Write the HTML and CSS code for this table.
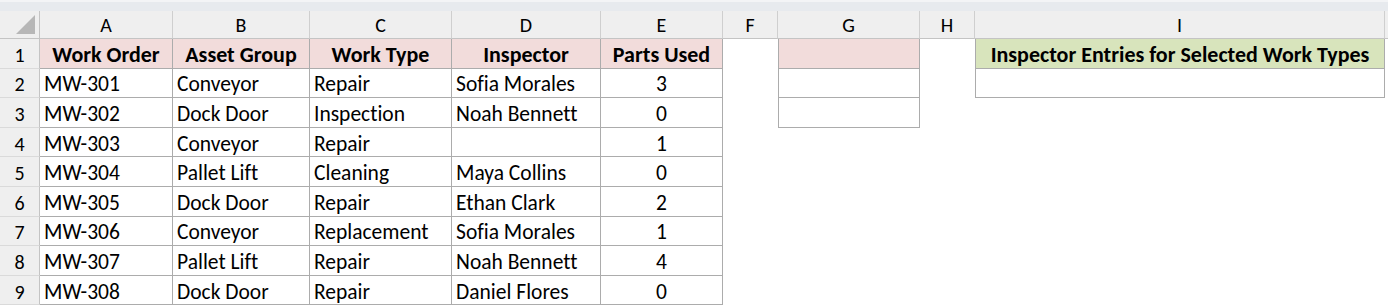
FILE: index.html
```html
<!DOCTYPE html>
<html>
<head>
<meta charset="utf-8">
<link rel="stylesheet" href="styles.css">
</head>
<body>
<div class="topbar"></div>
<div class="sheet">
  <div class="corner"><span class="tri"></span></div>
  <div class="ch">A</div><div class="ch">B</div><div class="ch">C</div><div class="ch">D</div><div class="ch">E</div><div class="ch">F</div><div class="ch">G</div><div class="ch">H</div><div class="ch">I</div><div class="ch end"></div>

  <div class="rh">1</div>
  <div class="c t hd">Work Order</div><div class="c t hd">Asset Group</div><div class="c t hd">Work Type</div><div class="c t hd">Inspector</div><div class="c t hd">Parts Used</div>
  <div class="c"></div><div class="c g hd"></div><div class="c"></div><div class="c i hdg">Inspector Entries for Selected Work Types</div><div class="c"></div>

  <div class="rh">2</div>
  <div class="c t">MW-301</div><div class="c t">Conveyor</div><div class="c t">Repair</div><div class="c t">Sofia Morales</div><div class="c t num">3</div>
  <div class="c"></div><div class="c g"></div><div class="c"></div><div class="c i"></div><div class="c"></div>

  <div class="rh">3</div>
  <div class="c t">MW-302</div><div class="c t">Dock Door</div><div class="c t">Inspection</div><div class="c t">Noah Bennett</div><div class="c t num">0</div>
  <div class="c"></div><div class="c g"></div><div class="c"></div><div class="c"></div><div class="c"></div>

  <div class="rh">4</div>
  <div class="c t">MW-303</div><div class="c t">Conveyor</div><div class="c t">Repair</div><div class="c t"></div><div class="c t num">1</div>
  <div class="c"></div><div class="c"></div><div class="c"></div><div class="c"></div><div class="c"></div>

  <div class="rh">5</div>
  <div class="c t">MW-304</div><div class="c t">Pallet Lift</div><div class="c t">Cleaning</div><div class="c t">Maya Collins</div><div class="c t num">0</div>
  <div class="c"></div><div class="c"></div><div class="c"></div><div class="c"></div><div class="c"></div>

  <div class="rh">6</div>
  <div class="c t">MW-305</div><div class="c t">Dock Door</div><div class="c t">Repair</div><div class="c t">Ethan Clark</div><div class="c t num">2</div>
  <div class="c"></div><div class="c"></div><div class="c"></div><div class="c"></div><div class="c"></div>

  <div class="rh">7</div>
  <div class="c t">MW-306</div><div class="c t">Conveyor</div><div class="c t">Replacement</div><div class="c t">Sofia Morales</div><div class="c t num">1</div>
  <div class="c"></div><div class="c"></div><div class="c"></div><div class="c"></div><div class="c"></div>

  <div class="rh">8</div>
  <div class="c t">MW-307</div><div class="c t">Pallet Lift</div><div class="c t">Repair</div><div class="c t">Noah Bennett</div><div class="c t num">4</div>
  <div class="c"></div><div class="c"></div><div class="c"></div><div class="c"></div><div class="c"></div>

  <div class="rh">9</div>
  <div class="c t">MW-308</div><div class="c t">Dock Door</div><div class="c t">Repair</div><div class="c t">Daniel Flores</div><div class="c t num">0</div>
  <div class="c"></div><div class="c"></div><div class="c"></div><div class="c"></div><div class="c"></div>
</div>
</body>
</html>
```

FILE: styles.css
```css
html, body {
  margin: 0;
  padding: 0;
  background: #ffffff;
  overflow: hidden;
}

body {
  font-family: Carlito, Calibri, Lato, "Liberation Sans", sans-serif;
  font-size: 21.5px;
  font-variant-ligatures: none;
  color: #000000;
  width: 1388px;
  height: 307px;
}

.topbar {
  height: 11px;
  background: #e7eaee;
  box-sizing: border-box;
  border-top: 2px solid #f3f4f6;
}

.sheet {
  display: grid;
  grid-template-columns: 40px 133px 137px 142px 149px 122px 55px 142px 55px 410px 1fr;
  grid-template-rows: 28px;
  grid-auto-rows: 29.6px;
}

.corner {
  background: #efefef;
  border-right: 1px solid #c4c4c4;
  border-bottom: 1px solid #c4c4c4;
  box-sizing: border-box;
  position: relative;
}

.tri {
  position: absolute;
  right: 4px;
  bottom: 4px;
  width: 0;
  height: 0;
  border-left: 19px solid transparent;
  border-bottom: 19px solid #b7b7b7;
}

.ch {
  background: #efefef;
  border-right: 1px solid #cfcfcf;
  border-bottom: 1px solid #c4c4c4;
  box-sizing: border-box;
  display: flex;
  align-items: center;
  justify-content: center;
  padding-top: 1px;
  font-size: 20px;
}

.ch.end {
  border-right: none;
}

.rh {
  background: #efefef;
  border-right: 1px solid #c4c4c4;
  border-bottom: 1px solid #dadada;
  box-sizing: border-box;
  display: flex;
  align-items: center;
  justify-content: center;
  padding-top: 3px;
  font-size: 20px;
}

.c {
  box-sizing: border-box;
  display: flex;
  align-items: center;
  padding: 3px 4px 0 4px;
  white-space: nowrap;
  overflow: hidden;
}

.t {
  border-right: 1px solid #acacac;
  border-bottom: 1px solid #acacac;
}

.g {
  border-left: 1px solid #acacac;
  border-right: 1px solid #acacac;
  border-bottom: 1px solid #acacac;
}

.i {
  border-left: 1px solid #acacac;
  border-right: 1px solid #acacac;
  border-bottom: 1px solid #acacac;
}

.hd {
  background: #f2dcdb;
  font-weight: bold;
  font-size: 22px;
  justify-content: center;
}

.hdg {
  background: #d8e4bc;
  font-weight: bold;
  font-size: 22px;
  justify-content: center;
}

.num {
  justify-content: center;
}
```
